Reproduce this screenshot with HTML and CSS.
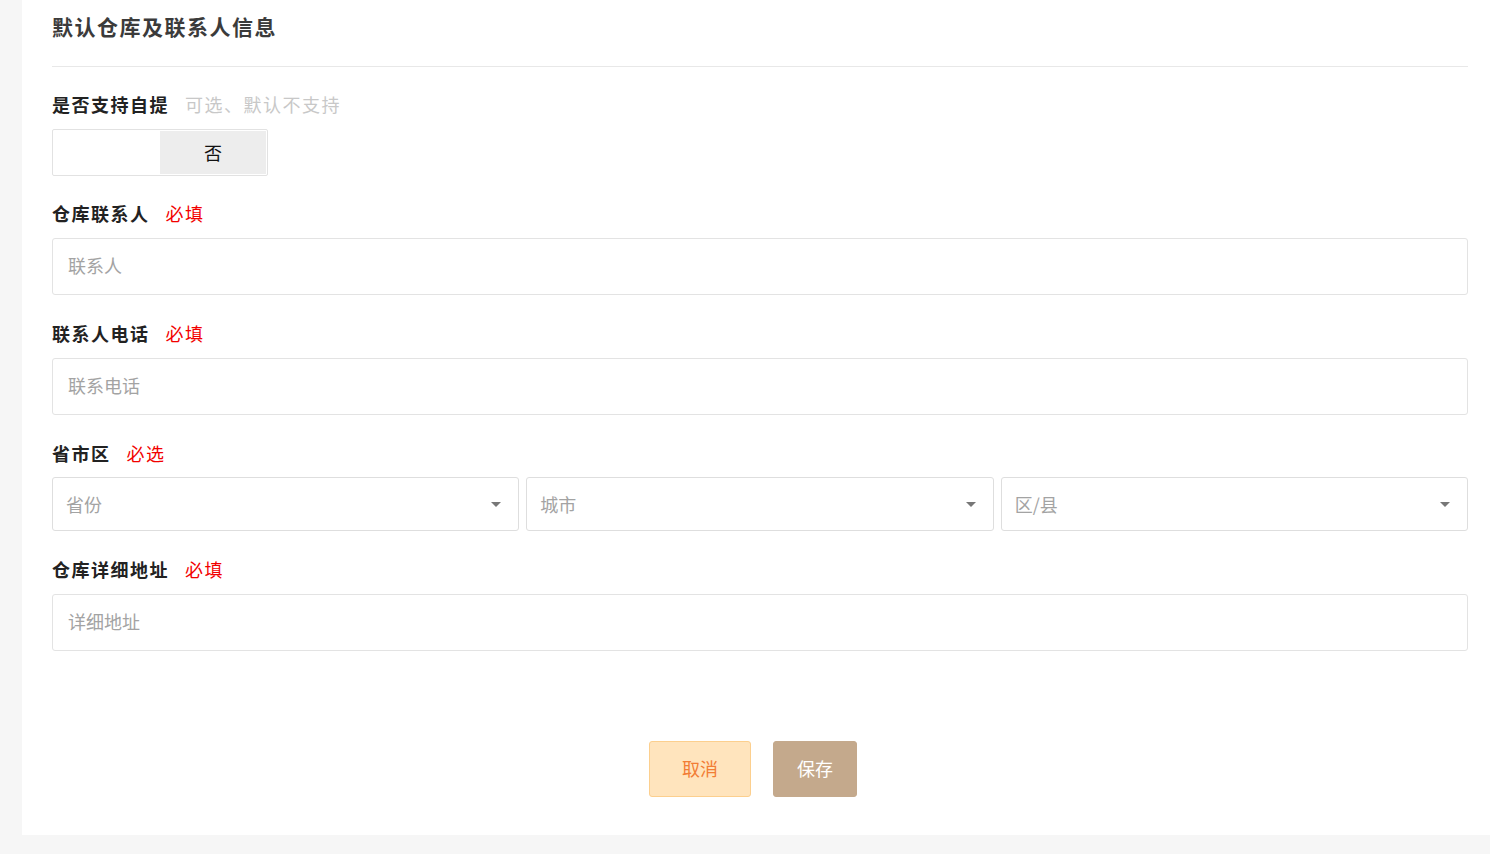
FILE: index.html
```html
<!DOCTYPE html>
<html lang="zh-CN">
<head>
<meta charset="utf-8">
<title>默认仓库及联系人信息</title>
<link rel="stylesheet" href="styles.css">
</head>
<body>
<div class="panel">
  <div class="header"><h2 class="title">默认仓库及联系人信息</h2></div>
  <div class="form">
    <div class="field field-toggle">
      <div class="label">是否支持自提<span class="hint">可选、默认不支持</span></div>
      <div class="toggle"><span class="toggle-off"></span><span class="toggle-on">否</span></div>
    </div>
    <div class="field">
      <div class="label">仓库联系人<span class="req">必填</span></div>
      <input class="input" type="text" placeholder="联系人">
    </div>
    <div class="field">
      <div class="label">联系人电话<span class="req">必填</span></div>
      <input class="input" type="text" placeholder="联系电话">
    </div>
    <div class="field">
      <div class="label">省市区<span class="req">必选</span></div>
      <div class="selects">
        <div class="select"><span>省份</span><svg class="caret" width="10" height="5" viewBox="0 0 10 5"><path d="M0 0H10L5 5Z" fill="#777"/></svg></div>
        <div class="select"><span>城市</span><svg class="caret" width="10" height="5" viewBox="0 0 10 5"><path d="M0 0H10L5 5Z" fill="#777"/></svg></div>
        <div class="select"><span>区/县</span><svg class="caret" width="10" height="5" viewBox="0 0 10 5"><path d="M0 0H10L5 5Z" fill="#777"/></svg></div>
      </div>
    </div>
    <div class="field">
      <div class="label">仓库详细地址<span class="req">必填</span></div>
      <input class="input" type="text" placeholder="详细地址">
    </div>
  </div>
  <div class="actions">
    <button class="btn btn-cancel" type="button">取消</button>
    <button class="btn btn-save" type="button">保存</button>
  </div>
</div>
</body>
</html>
```
FILE: styles.css
```css
* { box-sizing: border-box; }
html, body { margin: 0; padding: 0; }
body {
  background: #f6f6f6;
  font-family: "Noto Sans CJK SC", "Noto Sans", sans-serif;
  width: 1490px;
  height: 854px;
  overflow: hidden;
}
.panel {
  margin-left: 22px;
  width: 1468px;
  height: 835px;
  background: #fff;
  padding: 0 22px 0 30px;
}
.header {
  height: 67px;
  border-bottom: 1px solid #e8e8e8;
  padding-top: 11px;
}
.title {
  margin: 0;
  font-size: 21px;
  line-height: 30px;
  font-weight: 700;
  color: #3b3b3b;
  letter-spacing: 1.5px;
}
.form { padding-top: 27px; }
.field { margin-bottom: 28px; }
.field-toggle { margin-bottom: 27px; }
.field:last-child { margin-bottom: 0; }
.label {
  font-size: 18px;
  line-height: 20px;
  padding-bottom: 4px;
  font-weight: 700;
  color: #222;
  letter-spacing: 1.5px;
  margin-bottom: 11px;
  display: flex;
  align-items: center;
}
.hint, .req {
  font-weight: 400;
  margin-left: 16px;
  letter-spacing: 1.5px;
}
.hint { color: #c8c8c8; }
.req { color: #f20000; }
.toggle {
  width: 216px;
  height: 47px;
  border: 1px solid #e2e2e2;
  border-radius: 2px;
  display: flex;
  padding: 1px;
}
.toggle-off { width: 106px; }
.toggle-on {
  flex: 1;
  background: #ededed;
  display: flex;
  align-items: center;
  justify-content: center;
  font-size: 18px;
  color: #111;
  padding-bottom: 2px;
}
.input {
  display: block;
  width: 100%;
  height: 57px;
  border: 1px solid #e3e3e3;
  border-radius: 3px;
  padding: 0 15px 3px;
  font-family: inherit;
  font-size: 18px;
  color: #333;
  outline: none;
  background: #fff;
}
.input::placeholder { color: #a3a3a3; }
.selects {
  display: flex;
  gap: 7px;
  margin-top: -1px;
}
.select {
  flex: 1;
  height: 54px;
  border: 1px solid #dedede;
  border-radius: 3px;
  display: flex;
  align-items: center;
  justify-content: space-between;
  padding: 0 17px 0 13px;
  font-size: 18px;
  color: #a3a3a3;
}
.select span { padding-bottom: 1px; }
.caret { display: block; }
.actions {
  display: flex;
  justify-content: center;
  gap: 22px;
  margin-top: 90px;
  padding-right: 14px;
}
.btn {
  height: 56px;
  border-radius: 3px;
  font-family: inherit;
  font-size: 18px;
  cursor: pointer;
  padding: 0 0 2px;
}
.btn-cancel {
  width: 102px;
  background: #ffe4bd;
  border: 1px solid #fccf8e;
  color: #f27d35;
}
.btn-save {
  width: 84px;
  background: #c4a98c;
  border: 1px solid #c4a98c;
  color: #fff;
}
```
